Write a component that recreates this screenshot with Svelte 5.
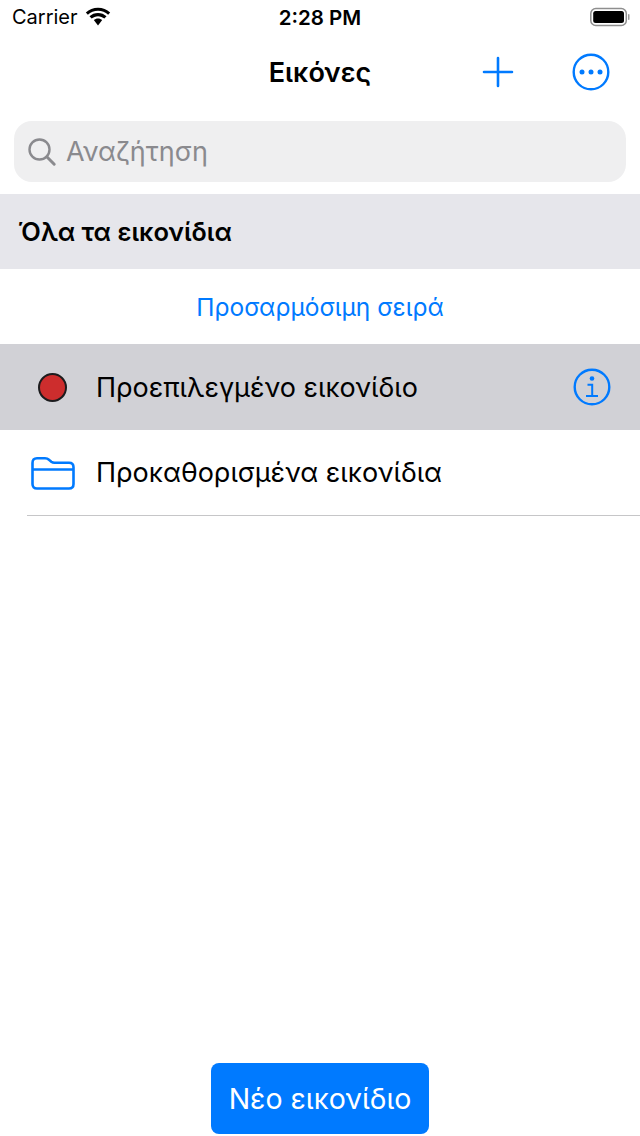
<script lang="ts">
    const blue = "#007aff";
</script>

<div class="screen">
    <div class="status">
        <div class="carrier">
            <span>Carrier</span>
            <svg class="wifi" width="28" height="20" viewBox="0 0 26 18">
                <path d="M13 3.200c3.600 0 6.900 1.400 9.400 3.700l1.900-2.100C21.300 2 17.300.3 13 .3S4.700 2 1.700 4.800l1.900 2.100C6.100 4.600 9.400 3.200 13 3.200z" fill="#000" />
                <path d="M13 8.200c2.200 0 4.300.8 5.900 2.300l2-2.100C18.800 6.400 16 5.300 13 5.300s-5.800 1.100-7.900 3.100l2 2.100c1.600-1.500 3.700-2.300 5.900-2.300z" fill="#000" />
                <path d="M13 10.300c-1.500 0-2.800.6-3.900 1.500L13 17l3.900-5.200c-1.100-.9-2.400-1.500-3.900-1.500z" fill="#000" />
            </svg>
        </div>
        <div class="time">2:28 PM</div>
        <svg class="battery" width="40" height="20" viewBox="0 0 40 20">
            <rect x="0.800" y="1.500" width="35.500" height="17" rx="5" fill="none" stroke="#8e8e8e" stroke-width="1.500" />
            <rect x="3.200" y="4" width="30.800" height="12" rx="2.500" fill="#000" />
            <rect x="38" y="7" width="1.500" height="6" rx="0.700" fill="#9a9a9a" />
        </svg>
    </div>

    <nav class="nav">
        <div class="nav-title">Εικόνες</div>
        <div class="nav-actions">
            <svg width="32" height="32" viewBox="0 0 32 32">
                <path d="M16 2v28M2 16h28" stroke={blue} stroke-width="2.600" stroke-linecap="round" fill="none" />
            </svg>
            <svg width="38" height="38" viewBox="0 0 38 38">
                <circle cx="19" cy="19" r="17.300" stroke={blue} stroke-width="2.400" fill="none" />
                <circle cx="10" cy="19" r="2.500" fill={blue} />
                <circle cx="19" cy="19" r="2.500" fill={blue} />
                <circle cx="28" cy="19" r="2.500" fill={blue} />
            </svg>
        </div>
    </nav>

    <div class="search">
        <svg width="30" height="30" viewBox="0 0 30 30">
            <circle cx="12.500" cy="12.500" r="10" stroke="#8a8a8e" stroke-width="2.400" fill="none" />
            <path d="M19.800 19.800l7.400 7.400" stroke="#8a8a8e" stroke-width="3" stroke-linecap="round" />
        </svg>
        <span>Αναζήτηση</span>
    </div>

    <div class="section">Όλα τα εικονίδια</div>
    <div class="link-row">Προσαρμόσιμη σειρά</div>

    <div class="row selected">
        <span class="dot"></span>
        <span class="label">Προεπιλεγμένο εικονίδιο</span>
        <svg class="info" width="38" height="38" viewBox="0 0 38 38">
            <circle cx="19" cy="19" r="17.300" stroke={blue} stroke-width="2.400" fill="none" />
            <circle cx="19" cy="10.500" r="2.300" fill={blue} />
            <path d="M14.500 16.800h4.700v10.400M13 28h12" stroke={blue} stroke-width="2" fill="none" />
        </svg>
    </div>

    <div class="row plain">
        <svg class="folder" width="44" height="34" viewBox="0 0 44 34">
            <path d="M1.500 7c0-3 1.500-4.800 4.500-4.800h8c2 0 3 .6 4.300 1.800l2 1.700c1 .8 1.800 1.100 3.200 1.100H38c3 0 4.500 1.600 4.500 4.500V28c0 3-1.500 4.500-4.500 4.500H6c-3 0-4.500-1.500-4.500-4.500z" stroke={blue} stroke-width="2.600" fill="none" />
            <path d="M1.500 13.500h41" stroke={blue} stroke-width="2.400" />
        </svg>
        <span class="label">Προκαθορισμένα εικονίδια</span>
    </div>
    <div class="separator"></div>

    <div class="spacer"></div>
    <div class="footer">
        <button class="new-btn">Νέο εικονίδιο</button>
    </div>
</div>

<style>
    :global(body) {
        margin: 0;
        background: #fff;
    }

    .screen {
        width: 640px;
        height: 1136px;
        display: flex;
        flex-direction: column;
        font-family: Inter, "Liberation Sans", sans-serif;
        color: #000;
        overflow: hidden;
    }

    .status {
        height: 40px;
        flex: none;
        display: grid;
        grid-template-columns: 1fr auto 1fr;
        align-items: center;
        padding: 0 10px 6px 10px;
        box-sizing: border-box;
        font-size: 20px;
    }

    .carrier {
        display: flex;
        align-items: center;
        gap: 6px;
        padding-left: 2px;
    }

    .time {
        font-size: 20.500px;
        font-weight: 600;
    }

    .battery {
        justify-self: end;
    }

    .nav {
        height: 64px;
        flex: none;
        position: relative;
        display: flex;
        align-items: center;
        justify-content: flex-end;
    }

    .nav-title {
        position: absolute;
        left: 0;
        right: 0;
        text-align: center;
        font-size: 27px;
        font-weight: 600;
    }

    .nav-actions {
        display: flex;
        align-items: center;
        gap: 58px;
        padding-right: 30px;
    }

    .search {
        margin: 17px 14px 12px;
        height: 61px;
        flex: none;
        border-radius: 18px;
        background: #efeff0;
        display: flex;
        align-items: center;
        gap: 9px;
        padding-left: 13px;
        font-size: 27px;
        color: #8a8a8e;
    }

    .section {
        height: 75px;
        flex: none;
        background: #e6e6eb;
        display: flex;
        align-items: center;
        padding-left: 18px;
        font-size: 25.500px;
        font-weight: 600;
    }

    .link-row {
        height: 75px;
        flex: none;
        display: flex;
        align-items: center;
        justify-content: center;
        font-size: 24.500px;
        color: #007aff;
    }

    .row {
        height: 86px;
        flex: none;
        display: flex;
        align-items: center;
        font-size: 27px;
        position: relative;
    }

    .row.plain {
        height: 85px;
    }

    .row.selected {
        background: #d1d1d6;
    }

    .dot {
        width: 25px;
        height: 25px;
        margin-left: 38px;
        margin-right: 29px;
        border-radius: 50%;
        background: #cd2d2d;
        border: 2.500px solid #1c1c1e;
        flex: none;
    }

    .folder {
        margin-left: 31px;
        margin-right: 21px;
    }

    .info {
        position: absolute;
        right: 29px;
        top: 24px;
    }

    .separator {
        height: 1px;
        flex: none;
        margin-left: 27px;
        background: #c6c6c8;
    }

    .spacer {
        flex: 1;
    }

    .footer {
        display: flex;
        justify-content: center;
        padding-bottom: 2px;
    }

    .new-btn {
        width: 218px;
        height: 71px;
        border: none;
        border-radius: 8px;
        background: #007aff;
        color: #fff;
        font-family: inherit;
        font-size: 28.500px;
    }
</style>
